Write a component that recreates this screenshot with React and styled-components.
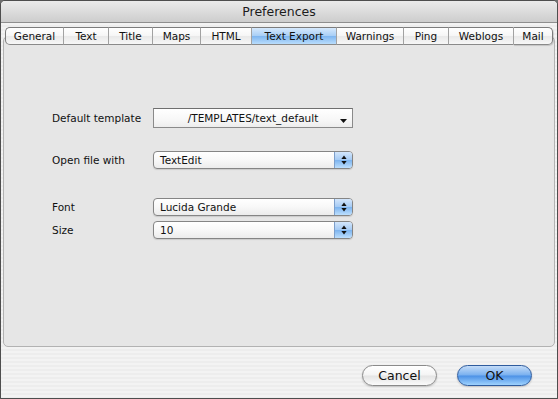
import styled, { createGlobalStyle } from 'styled-components';

const GlobalStyle = createGlobalStyle`
  html, body {
    margin: 0;
    padding: 0;
    background: #6e6e6e;
  }
  body {
    font-family: "DejaVu Sans", "Noto Sans", sans-serif;
  }
`;

const tabs = [
  { label: 'General', width: 58 },
  { label: 'Text', width: 45 },
  { label: 'Title', width: 44 },
  { label: 'Maps', width: 48 },
  { label: 'HTML', width: 51 },
  { label: 'Text Export', width: 85, active: true },
  { label: 'Warnings', width: 67 },
  { label: 'Ping', width: 45 },
  { label: 'Weblogs', width: 65 },
  { label: 'Mail', width: 40 },
];

function UpDownArrows() {
  return (
    <svg width="6" height="10" viewBox="0 0 6 10">
      <path d="M3 0.5 L5.6 4 L0.4 4 Z" fill="#111" />
      <path d="M3 9.5 L5.6 6 L0.4 6 Z" fill="#111" />
    </svg>
  );
}

function DownArrow() {
  return (
    <svg width="7" height="4" viewBox="0 0 7 4">
      <path d="M0 0 L7 0 L3.5 4 Z" fill="#111" />
    </svg>
  );
}

function PopUp({ value }) {
  return (
    <PopUpBox>
      <PopUpValue>{value}</PopUpValue>
      <PopUpArrows>
        <UpDownArrows />
      </PopUpArrows>
    </PopUpBox>
  );
}

export default function App() {
  return (
    <>
      <GlobalStyle />
      <Window>
        <TitleBar>Preferences</TitleBar>
        <Content>
          <TabRow>
            {tabs.map(({ label, width, active }, index) => (
              <Tab
                key={label}
                $width={width}
                $active={active}
                $first={index === 0}
                $last={index === tabs.length - 1}
              >
                {label}
              </Tab>
            ))}
          </TabRow>
          <Pane>
            <FormRow $gap={0} $height={20}>
              <Label>Default template</Label>
              <PathBox>
                <PathText>/TEMPLATES/text_default</PathText>
                <PathArrow>
                  <DownArrow />
                </PathArrow>
              </PathBox>
            </FormRow>
            <FormRow $gap={23} $height={18}>
              <Label>Open file with</Label>
              <PopUp value="TextEdit" />
            </FormRow>
            <FormRow $gap={29} $height={18}>
              <Label>Font</Label>
              <PopUp value="Lucida Grande" />
            </FormRow>
            <FormRow $gap={5} $height={18}>
              <Label>Size</Label>
              <PopUp value="10" />
            </FormRow>
          </Pane>
        </Content>
        <Footer>
          <PushButton>Cancel</PushButton>
          <PushButton $default>OK</PushButton>
        </Footer>
      </Window>
    </>
  );
}

const Window = styled.div`
  width: 558px;
  height: 399px;
  box-sizing: border-box;
  border: 1px solid #4e4e4e;
  border-radius: 5px 5px 0 0;
  overflow: hidden;
  display: flex;
  flex-direction: column;
  background: repeating-linear-gradient(
    to bottom,
    #ededed 0px,
    #ededed 2px,
    #f3f3f3 2px,
    #f3f3f3 4px
  );
`;

const TitleBar = styled.div`
  height: 21px;
  flex: none;
  display: flex;
  align-items: center;
  justify-content: center;
  font-size: 12.5px;
  color: #1c1c1c;
  background: linear-gradient(to bottom, #ebebeb 0%, #dcdcdc 50%, #cdcdcd 100%);
  border-bottom: 1px solid #8e8e8e;
`;

const Content = styled.div`
  display: flex;
  flex-direction: column;
  padding: 4px 2px 0;
`;

const TabRow = styled.div`
  display: flex;
  justify-content: center;
  position: relative;
  z-index: 1;
  height: 18px;
`;

const Tab = styled.div`
  width: ${(p) => p.$width}px;
  box-sizing: border-box;
  height: 18px;
  display: flex;
  align-items: center;
  justify-content: center;
  font-size: 10.5px;
  color: #111;
  border-top: 1px solid #7c7c7c;
  border-bottom: 1px solid #8a8a8a;
  border-left: 1px solid ${(p) => (p.$first ? '#7c7c7c' : '#a2a2a2')};
  border-right: ${(p) => (p.$last ? '1px solid #7c7c7c' : 'none')};
  border-radius: ${(p) => (p.$first ? '5px 0 0 5px' : p.$last ? '0 5px 5px 0' : '0')};
  background: ${(p) =>
    p.$active
      ? 'linear-gradient(to bottom, #d6e9fd 0%, #a9cff6 48%, #7fb6f0 52%, #b9ddfd 100%)'
      : 'linear-gradient(to bottom, #ffffff 0%, #f6f6f6 48%, #e9e9e9 52%, #f7f7f7 100%)'};
  box-shadow: ${(p) => (p.$last ? '1px 1px 1px rgba(0, 0, 0, 0.15)' : 'none')};
`;

const Pane = styled.div`
  margin-top: -9px;
  height: 311px;
  box-sizing: border-box;
  border: 1px solid #b2b2b2;
  border-radius: 5px;
  background: #e6e6e6;
  padding: 71px 0 0 48px;
  display: flex;
  flex-direction: column;
`;

const FormRow = styled.div`
  display: grid;
  grid-template-columns: 101px 200px;
  align-items: center;
  height: ${(p) => p.$height}px;
  margin-top: ${(p) => p.$gap}px;
`;

const Label = styled.span`
  font-size: 10.5px;
  color: #111;
`;

const PathBox = styled.div`
  position: relative;
  height: 20px;
  box-sizing: border-box;
  border: 1px solid #8a8a8a;
  border-top-color: #6f6f6f;
  background: linear-gradient(to bottom, #ffffff 0%, #f7f7f7 60%, #ededed 100%);
  display: flex;
  align-items: center;
  justify-content: center;
`;

const PathText = styled.span`
  font-size: 10.5px;
  color: #111;
`;

const PathArrow = styled.span`
  position: absolute;
  right: 5px;
  bottom: 4px;
  display: flex;
`;

const PopUpBox = styled.div`
  height: 18px;
  box-sizing: border-box;
  border: 1px solid #858585;
  border-radius: 4px;
  display: flex;
  overflow: hidden;
  background: linear-gradient(to bottom, #ffffff 0%, #f8f8f8 50%, #ececec 100%);
  box-shadow: 0 1px 1px rgba(0, 0, 0, 0.12);
`;

const PopUpValue = styled.span`
  flex: 1;
  display: flex;
  align-items: center;
  padding-left: 6px;
  font-size: 10.5px;
  color: #111;
`;

const PopUpArrows = styled.span`
  width: 17px;
  display: flex;
  align-items: center;
  justify-content: center;
  border-left: 1px solid #7d9fcb;
  background: linear-gradient(to bottom, #d3e6fc 0%, #a6cbf4 48%, #7db4ef 52%, #bcdffe 100%);
`;

const Footer = styled.div`
  display: flex;
  justify-content: flex-end;
  gap: 20px;
  padding: 18px 25px 0 0;
`;

const PushButton = styled.button`
  width: 75px;
  height: 21px;
  box-sizing: border-box;
  padding: 0;
  border-radius: 11px;
  font-family: "DejaVu Sans", "Noto Sans", sans-serif;
  font-size: 12.5px;
  color: #111;
  border: 1px solid ${(p) => (p.$default ? '#2f5c9e' : '#8a8a8a')};
  background: ${(p) =>
    p.$default
      ? 'linear-gradient(to bottom, #c4dcf8 0%, #79b0ef 48%, #4c91e6 52%, #9ed2fe 100%)'
      : 'linear-gradient(to bottom, #ffffff 0%, #f4f4f4 48%, #e4e4e4 52%, #fbfbfb 100%)'};
  box-shadow: 0 1px 2px rgba(0, 0, 0, 0.2);
`;
